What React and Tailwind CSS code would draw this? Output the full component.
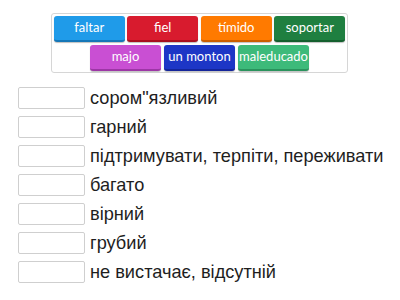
export default function App() {
  const tiles1 = [
    { t: "faltar", c: "bg-[#1f9be9]", b: "border-[#1577b8]" },
    { t: "fiel", c: "bg-[#d81b2e]", b: "border-[#a8101f]" },
    { t: "tímido", c: "bg-[#ff7a00]", b: "border-[#cc5e00]" },
    { t: "soportar", c: "bg-[#1f7f40]", b: "border-[#14602e]" },
  ];
  const tiles2 = [
    { t: "majo", c: "bg-[#c94fd3]", b: "border-[#9d36a6]" },
    { t: "un monton", c: "bg-[#1d36c6]", b: "border-[#14259a]" },
    { t: "maleducado", c: "bg-[#3dba7a]", b: "border-[#2a935d]" },
  ];
  const rows = [
    "сором\"язливий",
    "гарний",
    "підтримувати, терпіти, переживати",
    "багато",
    "вірний",
    "грубий",
    "не вистачає, відсутній",
  ];
  const Tile = ({ t, c, b }) => (
    <div
      className={`w-[71px] h-[26px] ${c} ${b} border-b-2 rounded-[3px] flex items-center justify-center text-white text-[13px] shadow-[0_1px_1px_rgba(0,0,0,0.25)]`}
      style={{ fontFamily: "Lato, 'Open Sans', sans-serif" }}
    >
      {t}
    </div>
  );
  return (
    <div className="w-[400px] h-[300px] bg-white relative overflow-hidden">
      <div className="pt-[13px] pl-[51px]">
        <div className="w-[297px] h-[60px] border border-[#d6d6d6] rounded-[3px] flex flex-col items-center pt-[2px] gap-[3px]">
          <div className="flex gap-[2.5px]">
            {tiles1.map((x) => (
              <Tile key={x.t} {...x} />
            ))}
          </div>
          <div className="flex gap-[3px]">
            {tiles2.map((x) => (
              <Tile key={x.t} {...x} />
            ))}
          </div>
        </div>
      </div>
      <div className="mt-[14px] pl-[18px] flex flex-col gap-[7px]">
        {rows.map((r) => (
          <div key={r} className="flex items-center h-[22px]">
            <div className="w-[67px] h-[22px] border border-[#cfcfcf] rounded-[2px] bg-white" />
            <div
              className="ml-[5px] text-[18.2px] text-[#1e1e1e] leading-none"
              style={{ fontFamily: "'Liberation Sans', Arial, sans-serif" }}
            >
              {r}
            </div>
          </div>
        ))}
      </div>
    </div>
  );
}
